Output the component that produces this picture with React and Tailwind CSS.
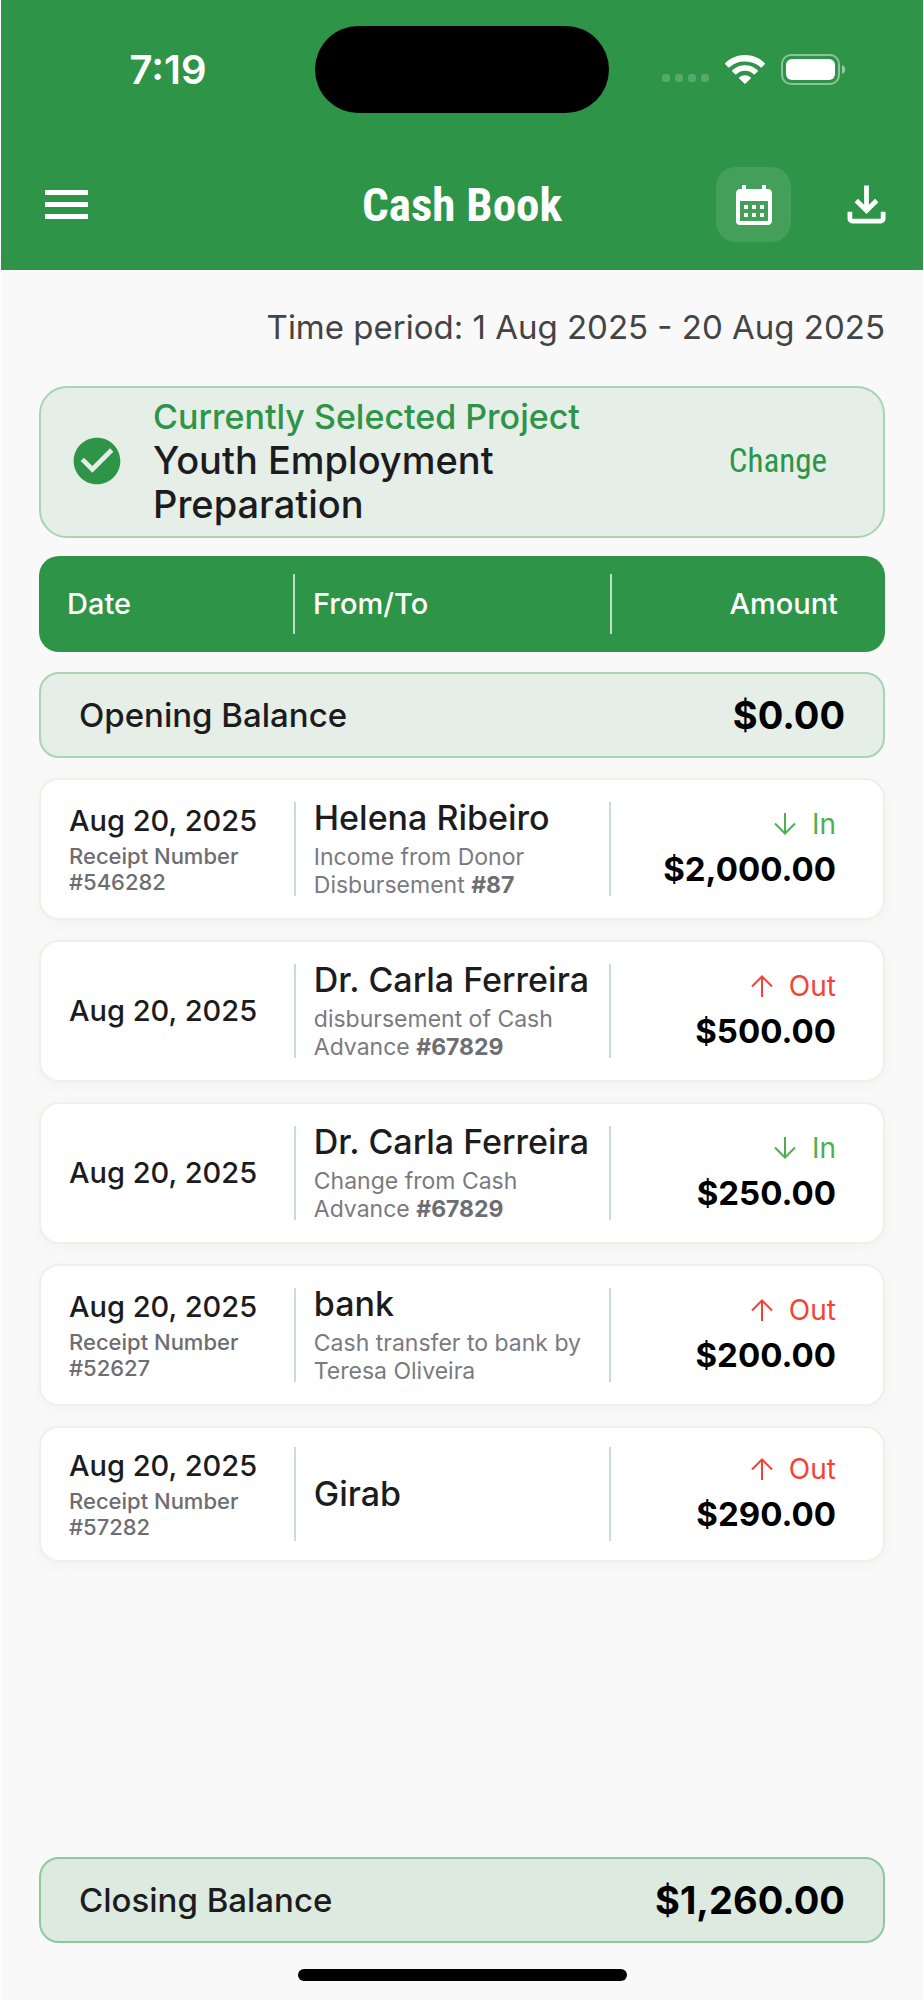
import React from 'react';
import cn from 'clsx';
import { MdCalendarMonth, MdCheckCircle } from 'react-icons/md';

const entries = [
   { id: 1, date: 'Aug 20, 2025', receipt: '#546282', name: 'Helena Ribeiro', text: 'Income from Donor Disbursement', ref: '#87', type: 'in', amount: '$2,000.00' },
   { id: 2, date: 'Aug 20, 2025', name: 'Dr. Carla Ferreira', text: 'disbursement of Cash Advance', ref: '#67829', type: 'out', amount: '$500.00' },
   { id: 3, date: 'Aug 20, 2025', name: 'Dr. Carla Ferreira', text: 'Change from Cash Advance', ref: '#67829', type: 'in', amount: '$250.00' },
   { id: 4, date: 'Aug 20, 2025', receipt: '#52627', name: 'bank', text: 'Cash transfer to bank by Teresa Oliveira', type: 'out', amount: '$200.00' },
   { id: 5, date: 'Aug 20, 2025', receipt: '#57282', name: 'Girab', type: 'out', amount: '$290.00' },
];

const ROW_GRID = 'grid grid-cols-[254fr_319fr_273fr] items-center';

// ============================================================================================================

const IconMenu = () => (
   <svg width="44" height="30" viewBox="0 0 44 30" fill="currentColor" aria-hidden>
      <path d="M0 0h43v5H0zM0 12h43v5H0zM0 24h43v5H0z" />
   </svg>
);

const IconDownload = () => (
   <svg width="57" height="57" viewBox="0 -960 960 960" fill="currentColor" aria-hidden>
      <path d="M480-320 280-520l56-58 104 104v-326h80v326l104-104 56 58-200 200ZM240-160q-33 0-56.5-23.5T160-240v-120h80v120h480v-120h80v120q0 33-23.5 56.5T720-160H240Z" />
   </svg>
);

const IconWifi = () => (
   <svg width="40" height="29" viewBox="0 0 40 29" fill="currentColor" aria-hidden>
      <path d="M20 0C12.300 0 5.300 3 .3 8.100a.8.8 0 0 0 0 1.200l2.900 2.900a.9.9 0 0 0 1.200 0A22.500 22.500 0 0 1 20 6.500c6 0 11.500 2.100 15.600 5.700a.9.9 0 0 0 1.200 0l2.900-2.900a.8.8 0 0 0 0-1.200C34.700 3 27.700 0 20 0z" />
      <path d="M20 10.200c-4.900 0-9.400 1.900-12.700 5a.8.8 0 0 0 0 1.200l2.900 2.900a.9.9 0 0 0 1.200 0 12.500 12.500 0 0 1 17.200 0 .9.9 0 0 0 1.200 0l2.900-2.900a.8.8 0 0 0 0-1.200c-3.300-3.100-7.800-5-12.700-5z" />
      <path d="M20 20.200c-2.200 0-4.200.8-5.700 2.100a.8.8 0 0 0 0 1.200l5.100 5.100a.8.8 0 0 0 1.200 0l5.100-5.100a.8.8 0 0 0 0-1.200 8.600 8.600 0 0 0-5.700-2.100z" />
   </svg>
);

const IconBattery = () => (
   <svg width="66" height="31" viewBox="0 0 66 31" fill="none" aria-hidden>
      <rect x="1" y="1" width="57" height="29" rx="9" stroke="white" strokeOpacity="0.45" strokeWidth="2" />
      <rect x="5" y="5" width="49" height="21" rx="6" fill="white" />
      <path d="M61 11c2 .8 3.200 2.500 3.200 4.500S63 19.200 61 20z" fill="white" fillOpacity="0.5" />
   </svg>
);

const IconArrow = ({ up }) => (
   <svg width="22" height="22" viewBox="0 0 22 22" fill="none" stroke="currentColor" strokeWidth="2" className={cn(up && 'rotate-180')} aria-hidden>
      <path d="M11 0v20M1 10.500l10 10 10-10" />
   </svg>
);

// ============================================================================================================

const StatusBar = () => {
   return (
      <div className="grid grid-cols-[1fr_294px_1fr] items-center pt-[26px]">
         <div className="pl-5 text-center text-[40px] leading-[48px] font-semibold">7:19</div>
         <div className="h-[87px] rounded-full bg-black" />
         <div className="flex items-center justify-center gap-4 pr-6">
            <div className="flex gap-[5px] pt-4">
               {[0, 1, 2, 3].map(item => (
                  <span key={item} className="h-2 w-2 rounded-[3px] bg-white/20" />
               ))}
            </div>
            <IconWifi />
            <IconBattery />
         </div>
      </div>
   );
};

const TopBar = () => {
   return (
      <div className="grid grid-cols-[1fr_auto_1fr] items-center px-7 pt-[54px] pb-7">
         <button type="button" aria-label="Menu" className="justify-self-start pl-4">
            <IconMenu />
         </button>
         <h1 className="font-['Roboto_Condensed','Liberation_Sans_Narrow',Roboto,sans-serif] text-[47px] leading-[56px] font-bold">Cash Book</h1>
         <div className="flex items-center justify-end gap-[47px]">
            <button type="button" aria-label="Select period" className="flex h-[75px] w-[75px] items-center justify-center rounded-[20px] bg-white/10">
               <MdCalendarMonth size={48} />
            </button>
            <button type="button" aria-label="Download">
               <IconDownload />
            </button>
         </div>
      </div>
   );
};

const SelectedProject = () => {
   return (
      <section className="flex items-center rounded-[28px] border-2 border-[#a9d3b3] bg-[#e5eee7] pt-2 pb-[10px] pr-14 pl-7">
         <MdCheckCircle size={56} className="shrink-0 text-[#2e9447]" />
         <div className="ml-7 flex-grow">
            <p className="text-[34px] leading-[42px] font-medium text-[#2e9447]">Currently Selected Project</p>
            <p className="max-w-[400px] text-[38px] leading-[44px] font-medium">Youth Employment Preparation</p>
         </div>
         <button type="button" className="font-['Roboto_Condensed','Liberation_Sans_Narrow',Roboto,sans-serif] text-[33px] text-[#2e9447]">
            Change
         </button>
      </section>
   );
};

const Balance = ({ title, value, className = '' }) => {
   return (
      <div className={cn('flex items-center justify-between rounded-[20px] border-2 px-[38px] py-[17px]', className)}>
         <span className="text-[33px] leading-[48px] font-medium">{title}</span>
         <span className="text-[38px] leading-[48px] font-bold text-black">{value}</span>
      </div>
   );
};

const EntryRow = ({ data }) => {
   const isOut = data.type === 'out';

   return (
      <tr className={cn(ROW_GRID, 'rounded-[20px] border-2 border-[#e8f3ea] bg-white py-[19px] shadow-[0_4px_16px_rgba(0,0,0,0.03)]')}>
         <td className="pl-7">
            <p className="text-[29px] leading-9 font-medium">{data.date}</p>
            {Boolean(data.receipt) && (
               <p className="mt-1 text-[22px] leading-[26px] font-medium text-[#6d6d72]">
                  Receipt Number
                  <br />
                  {data.receipt}
               </p>
            )}
         </td>
         <td className="flex min-h-[94px] items-center self-stretch">
            <span className="h-[94px] w-[2px] shrink-0 bg-[#c5e1cb]" />
            <div className="flex-grow px-[18px]">
               <p className="text-[34px] leading-[38px] font-medium whitespace-nowrap">{data.name}</p>
               {Boolean(data.text) && (
                  <p className="mt-[6px] text-[23px] leading-7 text-[#7a7a80]">
                     {data.text} {Boolean(data.ref) && <b className="font-bold text-[#6d6d72]">{data.ref}</b>}
                  </p>
               )}
            </div>
            <span className="h-[94px] w-[2px] shrink-0 bg-[#c5e1cb]" />
         </td>
         <td className="flex flex-col items-end pr-[47px]">
            <span className={cn('flex items-center gap-4 text-[28px] leading-10', isOut ? 'text-[#f44336]' : 'text-[#4caf50]')}>
               <IconArrow up={isOut} />
               {isOut ? 'Out' : 'In'}
            </span>
            <span className="text-[33px] leading-[50px] font-bold text-black">{data.amount}</span>
         </td>
      </tr>
   );
};

const CashTable = () => {
   return (
      <table className="block">
         <thead className="block">
            <tr className={cn(ROW_GRID, 'rounded-[20px] bg-[#2e9447] py-[18px] text-left text-[29px] text-white')}>
               <th className="pl-7 font-medium">Date</th>
               <th className="flex h-[60px] items-center border-x-2 border-white/70 pl-[18px] font-medium">From/To</th>
               <th className="pr-[47px] text-right font-medium">Amount</th>
            </tr>
         </thead>
         <tbody className="mt-5 flex flex-col gap-5">
            <tr className="block">
               <td colSpan={3} className="block">
                  <Balance title="Opening Balance" value="$0.00" className="border-[#a9d3b3] bg-[#e5eee7]" />
               </td>
            </tr>
            {entries.map(item => (
               <EntryRow key={item.id} data={item} />
            ))}
         </tbody>
      </table>
   );
};

export default function App() {
   return (
      <div className="flex min-h-screen flex-col border-x border-white bg-[#f9f9f9] font-[Inter,sans-serif] text-[#1c1c1e]">
         <header className="bg-[#2e9447] text-white">
            <StatusBar />
            <TopBar />
         </header>
         <main className="flex flex-grow flex-col px-[38px]">
            <p className="pt-[33px] pb-[35px] text-right text-[33px] leading-[48px] text-[#444446]">Time period: 1 Aug 2025 - 20 Aug 2025</p>
            <div className="flex flex-col gap-[18px]">
               <SelectedProject />
               <CashTable />
            </div>
            <div className="mt-auto pt-10">
               <Balance title="Closing Balance" value="$1,260.00" className="border-[#8fc89e] bg-[#dceadf]" />
            </div>
         </main>
         <footer className="flex justify-center pt-[26px] pb-[19px]">
            <div className="h-3 w-[329px] rounded-full bg-black" />
         </footer>
      </div>
   );
}
